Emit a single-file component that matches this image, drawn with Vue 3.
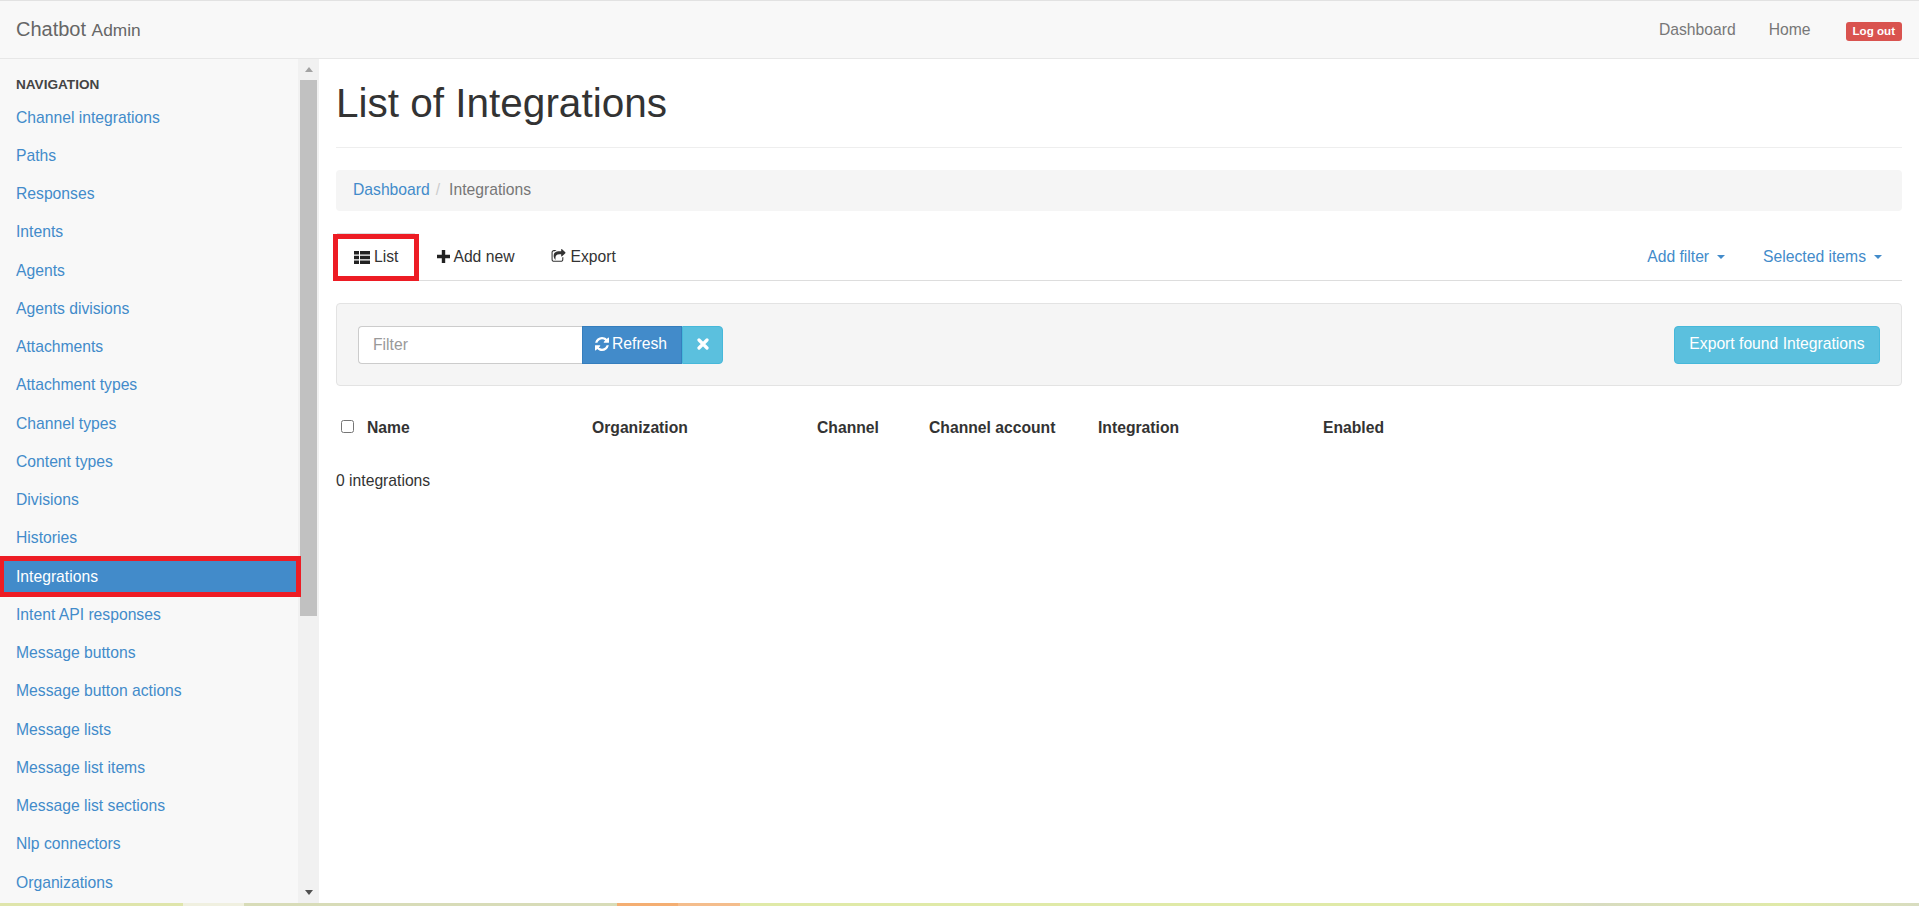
<script setup>
const navItems = [
  "Channel integrations", "Paths", "Responses", "Intents", "Agents", "Agents divisions",
  "Attachments", "Attachment types", "Channel types", "Content types", "Divisions", "Histories",
  "Integrations", "Intent API responses", "Message buttons", "Message button actions",
  "Message lists", "Message list items", "Message list sections", "Nlp connectors", "Organizations"
];
const columns = ["Name", "Organization", "Channel", "Channel account", "Integration", "Enabled"];
</script>

<template>
  <div class="page">
    <header class="navbar">
      <a class="brand">Chatbot <small>Admin</small></a>
      <nav class="top-links">
        <a>Dashboard</a>
        <a>Home</a>
        <a class="logout">Log out</a>
      </nav>
    </header>

    <div class="body">
      <aside class="sidebar">
        <div class="side-nav">
          <h5>Navigation</h5>
          <ul>
            <li v-for="item in navItems" :key="item" :class="{ active: item === 'Integrations' }">
              <a>{{ item }}</a>
            </li>
          </ul>
        </div>
        <div class="scrollbar">
          <span class="arrow up"></span>
          <span class="thumb"></span>
          <span class="arrow down"></span>
        </div>
      </aside>

      <main class="content">
        <h1>List of Integrations</h1>

        <div class="breadcrumb">
          <a>Dashboard</a><span class="sep">/</span><span class="current">Integrations</span>
        </div>

        <div class="tabs">
          <a class="tab active">
            <svg class="icon" width="16" height="13" viewBox="0 0 16 13">
              <path d="M0 0h5v3.4H0zM6 0h10v3.4H6zM0 4.8h5v3.4H0zM6 4.8h10v3.4H6zM0 9.6h5V13H0zM6 9.6h10V13H6z" fill="#222" />
            </svg>
            List
          </a>
          <a class="tab add-tab">
            <svg class="icon" width="13" height="13" viewBox="0 0 13 13">
              <path d="M4.8 0h3.4v4.8H13v3.4H8.2V13H4.8V8.2H0V4.8h4.8z" fill="#222" />
            </svg>
            Add new
          </a>
          <a class="tab">
            <svg class="icon" width="15" height="15" viewBox="0 0 1792 1792">
              <path fill="#333" d="M1472 989v259q0 119-84.5 203.5t-203.5 84.5h-832q-119 0-203.5-84.5t-84.5-203.5v-832q0-119 84.5-203.5t203.5-84.5h255q13 0 22.5 9.5t9.5 22.5q0 27-26 32-77 26-133 60-10 4-16 4h-112q-66 0-113 47t-47 113v832q0 66 47 113t113 47h832q66 0 113-47t47-113v-214q0-19 18-29 28-13 54-37 16-16 35-8 21 9 21 29zm237-496l-384 384q-18 19-45 19-12 0-25-5-39-17-39-59v-192h-160q-323 0-438 131-119 137-74 473 3 23-20 34-8 2-12 2-16 0-26-13-10-14-21-31t-39.5-68.5-49.5-99.5-38.5-114-17.5-122q0-49 3.5-91t14-90 28-88 47-81.5 68.5-74 94.5-61.5 124.5-48.5 159.5-30.5 196.5-11h160v-192q0-42 39-59 13-5 25-5 26 0 45 19l384 384q19 19 19 45t-19 45z" />
            </svg>
            Export
          </a>
          <div class="tabs-right">
            <a class="tab link">Add filter<span class="caret"></span></a>
            <a class="tab link">Selected items<span class="caret"></span></a>
          </div>
        </div>

        <div class="well">
          <div class="filter-group">
            <input type="text" placeholder="Filter" />
            <button class="btn primary">
              <svg class="icon" width="14" height="14" viewBox="0 0 1536 1536">
                <path fill="#fff" d="M1511 928q0 5-1 7-64 268-268 434.5t-478 166.5q-146 0-282.5-55t-243.5-157l-129 129q-19 19-45 19t-45-19-19-45v-448q0-26 19-45t45-19h448q26 0 45 19t19 45-19 45l-137 137q71 66 161 102t187 36q134 0 250-65t186-179q11-17 53-117 8-23 30-23h192q13 0 22.5 9.5t9.5 22.5zm25-800v448q0 26-19 45t-45 19h-448q-26 0-45-19t-19-45 19-45l138-138q-148-137-349-137-134 0-250 65t-186 179q-11 17-53 117-8 23-30 23h-199q-13 0-22.5-9.5t-9.5-22.5v-7q65-268 270-434.5t480-166.5q146 0 284 55.5t245 156.5l130-129q19-19 45-19t45 19 19 45z" />
              </svg>
              Refresh
            </button>
            <button class="btn info clear">
              <svg width="12" height="12" viewBox="0 0 12 12">
                <path d="M2 2l8 8M10 2l-8 8" stroke="#fff" stroke-width="3.2" stroke-linecap="round" />
              </svg>
            </button>
          </div>
          <button class="btn info export-btn">Export found Integrations</button>
        </div>

        <div class="table-head">
          <span class="check-cell"><input type="checkbox" /></span>
          <span v-for="col in columns" :key="col">{{ col }}</span>
        </div>

        <p class="count">0 integrations</p>
      </main>
    </div>

    <div class="bottom-strip"></div>
  </div>
</template>

<style>
html, body {
  margin: 0;
  overflow: hidden;
}
</style>

<style scoped>
.page {
  display: flex;
  flex-direction: column;
  height: 100vh;
  overflow: hidden;
  font-family: "Liberation Sans", Arial, sans-serif;
  font-size: 15.7px;
  color: #333;
  background: #fff;
  border-top: 1px solid #e2e2e2;
  box-sizing: border-box;
}

a {
  color: #428bca;
  text-decoration: none;
}

.navbar {
  flex: none;
  display: flex;
  align-items: center;
  justify-content: space-between;
  height: 57px;
  padding: 0 17px 0 16px;
  background: #f8f8f8;
  border-bottom: 1px solid #e7e7e7;
}

.brand {
  font-size: 20px;
  color: #666;
}

.brand small {
  font-size: 17.3px;
}

.top-links {
  display: flex;
  align-items: center;
  gap: 33px;
}

.top-links a {
  color: #777;
}

.top-links .logout {
  margin-top: 4px;
  margin-left: 2px;
  padding: 3px 7px 4px;
  font-size: 11.6px;
  font-weight: bold;
  line-height: 12px;
  color: #fff;
  background: #d9534f;
  border-radius: 3px;
}

.body {
  flex: 1;
  display: flex;
  min-height: 0;
}

.sidebar {
  flex: none;
  display: flex;
  width: 319px;
}

.side-nav {
  flex: none;
  width: 298px;
  background: #f8f8f8;
}

.side-nav h5 {
  margin: 0;
  padding: 18px 16px 0;
  height: 21.5px;
  font-size: 13.6px;
  line-height: 15px;
  font-weight: bold;
  text-transform: uppercase;
  color: #444;
}

.side-nav ul {
  margin: 0;
  padding: 0;
  list-style: none;
}

.side-nav li {
  position: relative;
  display: flex;
  align-items: center;
  height: 38.25px;
  padding-left: 16px;
}

.side-nav li.active {
  background: #428bca;
}

.side-nav li.active a {
  color: #fff;
}

.side-nav li.active::after {
  content: "";
  position: absolute;
  left: 0;
  top: -1.4px;
  width: 301px;
  height: 41px;
  box-sizing: border-box;
  border: 5px solid #ed1c24;
  border-left-width: 4px;
}

.scrollbar {
  flex: none;
  display: flex;
  flex-direction: column;
  width: 17px;
  padding: 0 2px;
  background: #f1f1f1;
}

.arrow {
  flex: none;
  display: flex;
  align-items: center;
  justify-content: center;
  height: 21px;
}

.arrow::before {
  content: "";
  border-left: 4.5px solid transparent;
  border-right: 4.5px solid transparent;
}

.arrow.up::before {
  border-bottom: 5px solid #a3a3a3;
}

.arrow.down {
  margin-top: auto;
}

.arrow.down::before {
  border-top: 5px solid #505050;
}

.thumb {
  flex: none;
  height: 536px;
  background: #c1c1c1;
}

.content {
  flex: 1;
  min-width: 0;
  padding: 0 17px;
}

.content h1 {
  margin: 22px 0 22px;
  padding-bottom: 22px;
  font-size: 40.5px;
  font-weight: 500;
  line-height: 44px;
  color: #333;
  border-bottom: 1px solid #eee;
}

.breadcrumb {
  display: flex;
  align-items: center;
  height: 41px;
  padding: 0 17px 2px;
  box-sizing: border-box;
  background: #f5f5f5;
  border-radius: 4px;
}

.sep {
  padding: 0 9px 0 6px;
  color: #ccc;
}

.current {
  color: #777;
}

.tabs {
  display: flex;
  align-items: stretch;
  height: 47px;
  margin-top: 22px;
  border-bottom: 1px solid #ddd;
}

.tab {
  position: relative;
  display: flex;
  align-items: center;
  padding: 0 17px;
  margin-right: 4px;
  color: #333;
}

.tab:first-child {
  margin-left: 1px;
}

.tab .icon {
  margin-right: 4px;
}

.add-tab {
  padding-left: 18px;
  padding-right: 16px;
}

.add-tab .icon {
  margin-right: 3px;
}

.tab.active {
  border: 1px solid #ddd;
  border-bottom: 0;
  padding: 0 16px;
}

.tab.active::after {
  content: "";
  position: absolute;
  left: -5px;
  top: 0;
  right: -5px;
  bottom: -1px;
  border: 5px solid #ed1c24;
}

.tabs-right {
  display: flex;
  margin-left: auto;
}

.tab.link {
  color: #428bca;
  margin-right: 0;
  padding: 0 19px;
}

.tab.link:last-child {
  padding-right: 20px;
}

.caret {
  margin-left: 8px;
  border-top: 4px solid #428bca;
  border-left: 4px solid transparent;
  border-right: 4px solid transparent;
}

.well {
  display: flex;
  align-items: center;
  justify-content: space-between;
  height: 83px;
  margin-top: 22px;
  padding: 0 21px 0 21px;
  box-sizing: border-box;
  background: #f5f5f5;
  border: 1px solid #e3e3e3;
  border-radius: 4px;
}

.filter-group {
  display: flex;
  height: 38px;
}

.filter-group input {
  width: 224px;
  height: 38px;
  padding: 0 14px;
  box-sizing: border-box;
  font: inherit;
  color: #555;
  background: #fff;
  border: 1px solid #ccc;
  border-right: 0;
  border-radius: 4px 0 0 4px;
  outline: none;
}

.filter-group input::placeholder {
  color: #999;
  opacity: 1;
}

.btn {
  display: flex;
  align-items: center;
  justify-content: center;
  height: 38px;
  padding: 0 0 2px;
  font: inherit;
  color: #fff;
  border: 1px solid transparent;
  box-sizing: border-box;
}

.btn .icon {
  margin-right: 3px;
}

.primary {
  width: 100px;
  padding-right: 2px;
  background: #428bca;
  border-color: #357ebd;
}

.info {
  background: #5bc0de;
  border-color: #46b8da;
}

.clear {
  width: 41px;
  border-radius: 0 4px 4px 0;
}

.export-btn {
  width: 206px;
  border-radius: 4px;
}

.table-head {
  display: grid;
  grid-template-columns: 31px 225px 225px 112px 169px 225px 1fr;
  align-items: center;
  height: 20px;
  margin-top: 32px;
  font-weight: bold;
}

.check-cell {
  display: flex;
  padding-left: 5px;
}

.check-cell input {
  width: 13px;
  height: 13px;
  margin: 0 0 3px;
}

.count {
  margin: 33px 0 0;
  line-height: 20px;
}

.bottom-strip {
  flex: none;
  height: 3px;
  background: linear-gradient(90deg,
    #dfe5ab 0, #dfe5ab 183px,
    #f0f0e0 183px, #f0f0e0 244px,
    #d8dcb8 244px, #d8dcb8 617px,
    #f4ae72 617px, #f4ae72 678px,
    #f4bd8c 678px, #f4bd8c 740px,
    #e0eaa8 740px, #e0eaa8 1500px,
    #d8dcc0 1600px, #e0eaa8 1780px, #d8dcc0 100%);
}
</style>
